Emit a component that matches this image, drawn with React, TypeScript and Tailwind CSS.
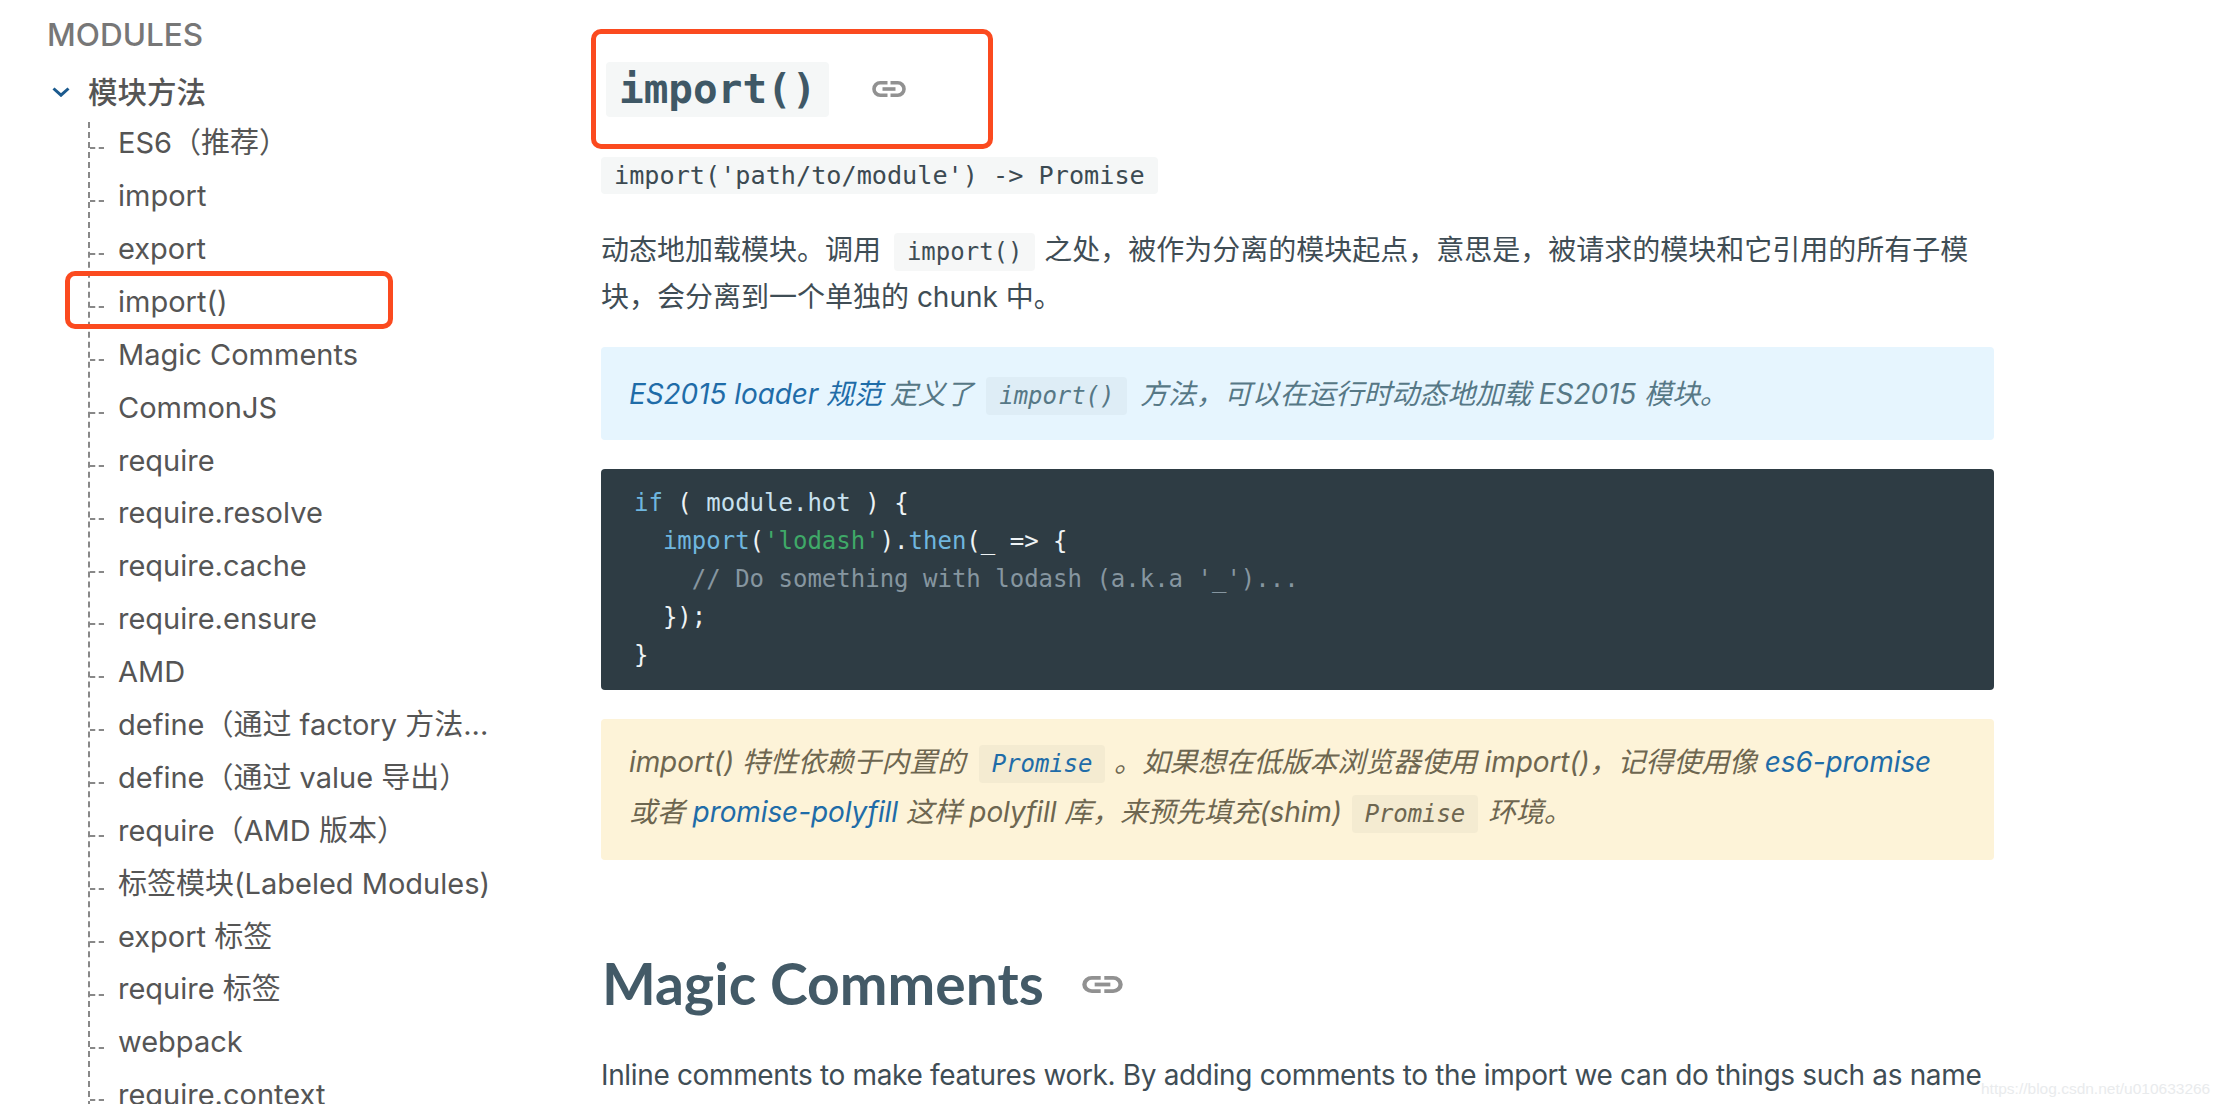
import { ReactNode } from "react";

const navItems = [
  "ES6（推荐）",
  "import",
  "export",
  "import()",
  "Magic Comments",
  "CommonJS",
  "require",
  "require.resolve",
  "require.cache",
  "require.ensure",
  "AMD",
  "define（通过 factory 方法...",
  "define（通过 value 导出）",
  "require（AMD 版本）",
  "标签模块(Labeled Modules)",
  "export 标签",
  "require 标签",
  "webpack",
  "require.context",
];

// chain icon next to the headings
function LinkIcon({ className }: { className: string }) {
  return (
    <svg viewBox="0 0 34 16" preserveAspectRatio="none" className={className} fill="none" stroke="#919191" strokeWidth="3.6">
      <path d="M15.5 1.8H8.2a6.2 6.2 0 0 0 0 12.4h7.3" />
      <path d="M18.5 1.8h7.3a6.2 6.2 0 0 1 0 12.4h-7.3" />
      <path d="M10.5 8h13" />
    </svg>
  );
}

function Code({ children, className = "" }: { children: ReactNode; className?: string }) {
  return (
    <code
      className={`rounded-[4px] bg-[#2e3c44]/[.045] px-[13px] py-[5px] font-['DejaVu_Sans_Mono',monospace] text-[24px] ${className}`}
    >
      {children}
    </code>
  );
}

function Sidebar() {
  return (
    <aside className="w-[601px] shrink-0 pl-[47px] text-[#555]">
      <div className="pt-[16px] text-[31.5px] leading-[38px] font-medium text-[#777]">MODULES</div>
      <div className="mt-[19px] flex h-[38px] items-center">
        <svg viewBox="0 0 18 10" className="ml-[5px] h-[10px] w-[18px]" fill="none" stroke="#1b5a8e" strokeWidth="3">
          <path d="M1.5 1.5 9 8.2l7.5-6.7" />
        </svg>
        <span className="ml-[18px] text-[29.5px] font-medium">模块方法</span>
      </div>
      <ul className="mt-[11px] ml-[41px] border-l-2 border-dashed border-[#888]">
        {navItems.map((item) => (
          <li key={item} className="flex h-[52.9px] items-center text-[29px] whitespace-nowrap">
            <span className="w-[14px] border-t-2 border-dashed border-[#888]" />
            <span className="ml-[14px] pb-[11px]">{item}</span>
          </li>
        ))}
      </ul>
    </aside>
  );
}

function Content() {
  return (
    <main className="w-[1393px] pt-[62px] text-[28px] text-[#3f4d55]">
      <h1 className="flex h-[55px] items-center pl-[5px]">
        <code className="rounded-[4px] bg-[#f5f7f7] px-[13px] font-['DejaVu_Sans_Mono',monospace] text-[41px] leading-[55px] font-bold text-[#3f5866]">
          import()
        </code>
        <LinkIcon className="mb-[2px] ml-[43px] h-[16px] w-[34px]" />
      </h1>

      <div className="mt-[36px] h-[37px]">
        <code className="inline-block h-[37px] rounded-[4px] bg-[#f5f7f7] px-[13px] font-['DejaVu_Sans_Mono',monospace] text-[25.2px] leading-[37px] text-[#3c4a52]">
          {"import('path/to/module') -> Promise"}
        </code>
      </div>

      <p className="mt-[38px] leading-[45px] whitespace-nowrap">
        动态地加载模块。调用 <Code className="mr-[1px] ml-[5px]">import()</Code> 之处，被作为分离的模块起点，意思是，被请求的模块和它引用的所有子模
        <br />
        块，会分离到一个单独的 chunk 中。
      </p>

      <div className="mt-[27px] flex h-[93px] items-center rounded-[4px] bg-[#e6f5fe] pl-[28px] tracking-[-0.08px] whitespace-nowrap text-[#567886] italic">
        <span>
          <a className="text-[#1f6ca8]">ES2015 loader 规范</a> 定义了 <Code className="mx-[5px]">import()</Code> 方法，可以在运行时动态地加载 ES2015 模块。
        </span>
      </div>

      <pre className="mt-[29px] h-[221px] rounded-[4px] bg-[#2e3c44] pt-[15px] pl-[33px] font-['DejaVu_Sans_Mono',monospace] text-[24px] leading-[38px] text-[#eef3f5]">
        <span className="text-[#6fb6df]">if</span> ( <span className="text-[#c8e1ef]">module.hot</span> ) {"{\n  "}
        <span className="text-[#6fb6df]">import</span>(<span className="text-[#3fa968]">'lodash'</span>).
        <span className="text-[#6fb6df]">then</span>(_ =&gt; {"{\n    "}
        <span className="text-[#8696a0]">{"// Do something with lodash (a.k.a '_')..."}</span>
        {"\n  });\n}"}
      </pre>

      <div className="mt-[29px] h-[141px] rounded-[4px] bg-[#fdf3d8] pt-[19px] pl-[28px] leading-[48px] tracking-[-0.1px] whitespace-nowrap text-[#6d6650] italic">
        import() 特性依赖于内置的 <Code className="mr-[1px] ml-[6px] text-[#1f6ca8]">Promise</Code> 。如果想在低版本浏览器使用 import()，记得使用像{" "}
        <a className="text-[#1f6ca8]">es6-promise</a>
        <br />
        或者 <a className="text-[#1f6ca8]">promise-polyfill</a> 这样 polyfill 库，来预先填充(shim) <Code className="mr-[2px] ml-[2px]">Promise</Code> 环境。
      </div>

      <h2 className="mt-[85px] flex h-[78px] items-center pl-[1px] font-['Lato',sans-serif] text-[57px] font-bold text-[#435a67]">
        Magic Comments
        <LinkIcon className="ml-[38px] h-[17px] w-[41px]" />
      </h2>

      <p className="mt-[29px] leading-[47px] tracking-[-0.35px] whitespace-nowrap">
        Inline comments to make features work. By adding comments to the import we can do things such as name
      </p>
    </main>
  );
}

export default function App() {
  return (
    <div className="relative flex h-[1104px] w-[2224px] overflow-hidden bg-white font-['Inter','Noto_Sans_CJK_SC',sans-serif]">
      <Sidebar />
      <Content />

      {/* hand-drawn highlight boxes */}
      <div className="absolute top-[29px] left-[591px] h-[120px] w-[402px] rounded-[10px] border-[5px] border-[#fb4a1f]" />
      <div className="absolute top-[271px] left-[65px] h-[58px] w-[328px] rounded-[10px] border-[5px] border-[#fb4a1f]" />

      <span className="absolute top-[1077px] left-[1981px] font-['Liberation_Sans',sans-serif] text-[15.5px] text-[#e9ebed]">
        https://blog.csdn.net/u010633266
      </span>
    </div>
  );
}
